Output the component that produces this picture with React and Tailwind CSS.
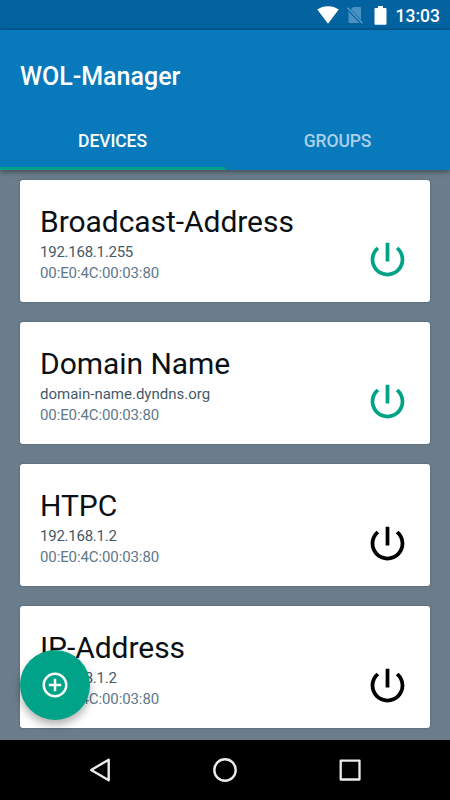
const devices = [
  { name: 'Broadcast-Address', host: '192.168.1.255', mac: '00:E0:4C:00:03:80', online: true },
  { name: 'Domain Name', host: 'domain-name.dyndns.org', mac: '00:E0:4C:00:03:80', online: true },
  { name: 'HTPC', host: '192.168.1.2', mac: '00:E0:4C:00:03:80', online: false },
  { name: 'IP-Address', host: '192.168.1.2', mac: '00:E0:4C:00:03:80', online: false },
];

function StatusBar() {
  return (
    <div className="flex h-[30px] shrink-0 items-center justify-end bg-gradient-to-b from-[#0363a1] from-90% to-[#03588f] pr-[10px] text-white">
      <svg className="ml-0 h-[18px] w-[22px]" viewBox="0 0 22 18" fill="currentColor">
        <path d="M0.3 3.6C3.2 1.4 6.9 0.2 11 0.2s7.8 1.2 10.7 3.4L11 17.8z" />
      </svg>
      <svg className="ml-[8px] h-[18px] w-[17px]" viewBox="0 0 17 18" fill="none">
        <path d="M6 1h7q1 0 1 1v11.800L4 3.400zM1.500 5.500L12.500 17H3Q1.500 17 1.500 15.700z" fill="#4b92c2" />
        <path d="M0.5 1.800L15.500 17.300" stroke="#5c9fca" strokeWidth="1.300" />
      </svg>
      <svg className="ml-[10px] h-[19px] w-[13px]" viewBox="0 0 13 19" fill="currentColor">
        <path d="M4 0h5v2h2.500q1 0 1 1v14.700q0 1-1 1h-10q-1 0-1-1V3q0-1 1-1H4z" />
      </svg>
      <span className="ml-[9px] pt-[2px] text-[17.500px] leading-[30px] font-medium">13:03</span>
    </div>
  );
}

function Header() {
  return (
    <header className="z-10 h-[140px] shrink-0 bg-[#087abb] text-white shadow-[0_2px_5px_rgba(0,0,0,0.4)]">
      <h1 className="pt-[29px] pl-5 text-[25px] leading-[35px] font-medium">WOL-Manager</h1>
      <nav className="mt-[16px] grid h-[60px] grid-cols-2 text-center text-[17.500px] leading-[62px] font-medium tracking-[-0.08px]">
        <span className="h-[60px] border-b-[3px] border-[#00a388]">DEVICES</span>
        <span className="text-[#a9d0e8]">GROUPS</span>
      </nav>
    </header>
  );
}

function DeviceCard({ device }) {
  const numericHost = /^[\d.]+$/.test(device.host);
  return (
    <article className="flex h-[122px] shrink-0 items-end justify-between rounded-[3px] bg-white p-5 shadow-[0_0_2px_rgba(30,65,90,0.5)]">
      <div className="-mb-[1px] whitespace-nowrap">
        <h2 className="text-[30px] leading-[40px] font-normal tracking-[-0.05px] text-[#0b1014]">{device.name}</h2>
        <p
          className={
            numericHost
              ? 'text-[15px] leading-[21px] tracking-[-0.24px] text-[#455a69]'
              : 'text-[15px] leading-[21px] text-[#455a69]'
          }
        >
          {device.host}
        </p>
        <p className="text-[15px] leading-[20px] tracking-[-0.1px] text-[#607889]">{device.mac}</p>
      </div>
      <svg
        className={device.online ? 'size-[45px] text-[#00a388]' : 'size-[45px] text-black'}
        viewBox="0 0 24 24"
        fill="currentColor"
      >
        <path d="M13 3h-2v10h2V3zm4.83 2.17l-1.42 1.42C17.99 7.86 19 9.81 19 12c0 3.87-3.13 7-7 7s-7-3.13-7-7c0-2.19 1.01-4.14 2.58-5.42L6.17 5.17C4.23 6.82 3 9.26 3 12c0 4.97 4.03 9 9 9s9-4.03 9-9c0-2.74-1.23-5.18-3.17-6.83z" />
      </svg>
    </article>
  );
}

function NavigationBar() {
  return (
    <div className="z-10 flex h-[60px] shrink-0 items-center justify-center gap-[101px] bg-black text-[#ececec]">
      <svg className="size-6" viewBox="0 0 24 24" fill="none" stroke="currentColor" strokeWidth="2.4" strokeLinejoin="round">
        <path d="M20.700 1.700v20.600L3.200 12z" />
      </svg>
      <svg className="size-6" viewBox="0 0 24 24" fill="none" stroke="currentColor" strokeWidth="2.4">
        <circle cx="12" cy="12" r="10.700" />
      </svg>
      <svg className="size-6" viewBox="0 0 24 24" fill="none" stroke="currentColor" strokeWidth="2.300" strokeLinejoin="round">
        <rect x="2.700" y="2.700" width="18.800" height="18.800" />
      </svg>
    </div>
  );
}

export default function App() {
  return (
    <div className="relative flex h-[800px] w-[450px] flex-col overflow-hidden bg-[#6b7d8b] font-[Roboto,sans-serif]">
      <StatusBar />
      <Header />
      <main className="flex h-[570px] flex-col gap-5 overflow-hidden px-5 pt-[10px]">
        {devices.map((device) => (
          <DeviceCard key={device.name} device={device} />
        ))}
      </main>
      <NavigationBar />
      <button
        aria-label="Add device"
        className="absolute bottom-20 left-5 flex size-[70px] items-center justify-center rounded-full bg-[#00a388] text-white shadow-[0_5px_9px_rgba(0,0,0,0.3)]"
      >
        <svg className="size-[30px]" viewBox="0 0 24 24" fill="currentColor">
          <path d="M13 7h-2v4H7v2h4v4h2v-4h4v-2h-4V7zm-1-5C6.480 2 2 6.480 2 12s4.480 10 10 10 10-4.480 10-10S17.520 2 12 2zm0 18c-4.410 0-8-3.590-8-8s3.590-8 8-8 8 3.590 8 8-3.590 8-8 8z" />
        </svg>
      </button>
    </div>
  );
}
